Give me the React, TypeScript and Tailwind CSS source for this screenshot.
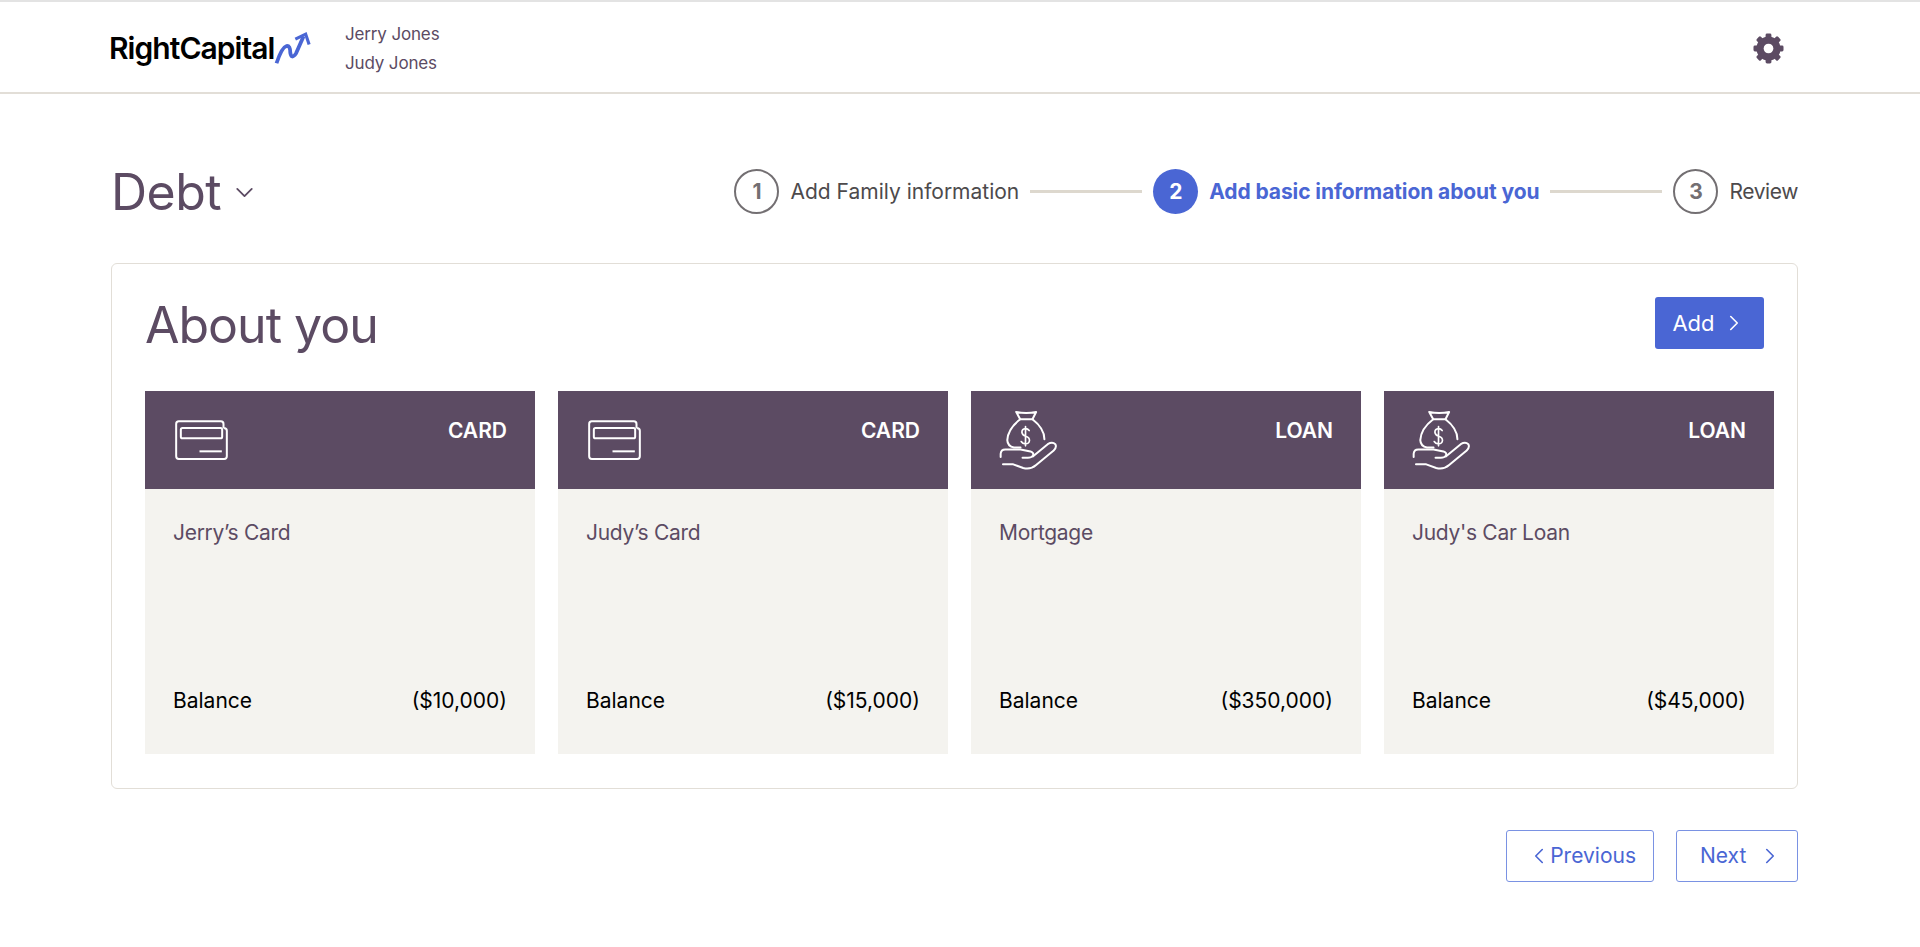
import { ChevronDown, ChevronLeft, ChevronRight } from "lucide-react";

const debts = [
  { kind: "CARD", name: "Jerry’s Card", balance: "($10,000)" },
  { kind: "CARD", name: "Judy’s Card", balance: "($15,000)" },
  { kind: "LOAN", name: "Mortgage", balance: "($350,000)" },
  { kind: "LOAN", name: "Judy's Car Loan", balance: "($45,000)" },
];

function LogoArrow() {
  return (
    <svg viewBox="820 90 118 108" className="w-[37px] h-[35px] shrink-0" fill="none" stroke="#4a66d4" strokeWidth="12">
      <path d="M828 191Q845 140 860 136Q872 134 872 158Q876 180 890 160L914 106" />
      <path d="M888 114L921 98L932 131" strokeWidth="10" />
    </svg>
  );
}

function Gear() {
  return (
    <svg viewBox="0 0 32 32" className="w-[31px] h-[31px]" fill="#5c4b63">
      <circle cx="16" cy="16" r="12.5" />
      {[0, 45, 90, 135, 180, 225, 270, 315].map((a) => (
        <rect key={a} x="13" y="0.5" width="6" height="6" rx="1.5" transform={`rotate(${a} 16 16)`} />
      ))}
      <circle cx="16" cy="16" r="5" fill="#fff" />
    </svg>
  );
}

function CardIcon() {
  return (
    <svg viewBox="135 118 158 120" className="w-[53px] h-[40px] ml-[2px]" fill="none" stroke="#fff" strokeWidth="6">
      <path d="M280 142V130Q280 122 272 122H146Q138 122 138 130V227Q138 235 146 235H282Q290 235 290 227V150Q290 142 280 142" />
      <rect x="152" y="142" width="124" height="31" rx="5" />
      <path d="M208 212H275" />
    </svg>
  );
}

function LoanIcon() {
  return (
    <svg viewBox="85 95 178 182" className="w-[59px] h-[61px]" fill="none" stroke="#fff" strokeWidth="6" strokeLinecap="round" strokeLinejoin="round">
      <path d="M137 100Q167 106 197 100L186 122H149Z" />
      <path d="M149 122Q112 150 110 185Q111 204 130 207H150M186 122Q222 150 222 182" />
      <path d="M176 156Q172 150 165 150Q154 151 154 161Q155 170 165 173Q177 176 177 186Q176 196 165 196Q156 196 152 189M165 144V202" strokeWidth="5" />
      <path d="M90 236V226Q91 213 104 213H150L180 219Q192 224 187 232Q183 238 172 238H156" />
      <path d="M187 234L232 197Q246 189 255 197Q260 206 250 216L197 260Q180 275 158 269L128 258H97" />
    </svg>
  );
}

function Step({ n, label, active, className }: { n: number; label: string; active?: boolean; className?: string }) {
  return (
    <div className="flex items-center gap-[11px]">
      <div
        className={
          active
            ? "w-[45px] h-[45px] rounded-full bg-[#4a66d4] text-white flex items-center justify-center font-bold text-[21px]"
            : "w-[45px] h-[45px] rounded-full border-2 border-[#736f72] text-[#736f72] flex items-center justify-center font-bold text-[21px]"
        }
      >
        {n}
      </div>
      <span className={(active ? "text-[21px] font-bold tracking-[-0.1px] text-[#4a66d4] " : "text-[21px] text-[#4d4a4c] ") + (className ?? "")}>{label}</span>
    </div>
  );
}

export default function App() {
  return (
    <div className="min-h-[947px] bg-white font-['Inter',sans-serif]">
      <header className="h-[94px] border-t-2 border-b-2 border-t-[#e3e3e3] border-b-[#e2ded7] flex items-center justify-between pt-[2px] pl-[109px] pr-[136px]">
        <div className="flex items-center">
          <div className="flex items-center w-[236px]">
            <span className="text-[30px] leading-none font-semibold tracking-[-0.95px] text-black">RightCapital</span>
            <LogoArrow />
          </div>
          <div className="pt-[1px] text-[17px] leading-[29px] tracking-[-0.15px] text-[#5c4b63]">
            <div>Jerry Jones</div>
            <div>Judy Jones</div>
          </div>
        </div>
        <Gear />
      </header>

      <main className="ml-[111px] mr-[122px]">
        <div className="flex items-center justify-between mt-[75px] h-[45px]">
          <div className="flex items-center gap-[9px]">
            <h1 className="text-[50px] leading-none text-[#5c4b63] tracking-[-0.5px]">Debt</h1>
            <ChevronDown className="w-[29px] h-[29px] text-[#5c4b63] mt-[2px]" strokeWidth={1.5} />
          </div>
          <div className="flex items-center">
            <Step n={1} label="Add Family information" />
            <div className="w-[112px] h-[3px] bg-[#ddd8ce] mx-[11px]" />
            <Step n={2} label="Add basic information about you" active />
            <div className="w-[112px] h-[3px] bg-[#ddd8ce] mx-[11px]" />
            <Step n={3} label="Review" className="tracking-[-0.4px]" />
          </div>
        </div>

        <section className="mt-[49px] h-[526px] border border-[#e2ded7] rounded-[6px] pl-[33px] pr-[23px] pt-[32px]">
          <div className="flex items-center justify-between h-[54px] pr-[10px]">
            <h2 className="pt-[3px] text-[50px] leading-none text-[#5c4b63] tracking-[-1px]">About you</h2>
            <button className="w-[109px] h-[52px] bg-[#4a66d4] rounded-[3px] text-white text-[22px] flex items-center justify-center gap-[6px]">
              Add
              <ChevronRight className="w-[26px] h-[26px]" strokeWidth={1.5} />
            </button>
          </div>

          <div className="grid grid-cols-4 gap-[23px] mt-[41px]">
            {debts.map((d) => (
              <div key={d.name} className="h-[363px] bg-[#f4f3ef] flex flex-col">
                <div className="h-[98px] bg-[#5c4b63] flex justify-between pl-[28px] pr-[28px]">
                  <div className="flex items-center">{d.kind === "CARD" ? <CardIcon /> : <LoanIcon />}</div>
                  <span className="text-white text-[21px] font-semibold mt-[24px]">{d.kind}</span>
                </div>
                <div className="flex flex-col flex-1 justify-between pl-[28px] pr-[28px] pt-[28px] pb-[38px]">
                  <div className="text-[21px] tracking-[-0.3px] text-[#5c4b63]">{d.name}</div>
                  <div className="flex justify-between text-[21px] text-black">
                    <span>Balance</span>
                    <span>{d.balance}</span>
                  </div>
                </div>
              </div>
            ))}
          </div>
        </section>

        <div className="flex justify-end gap-[22px] mt-[41px]">
          <button className="w-[148px] h-[52px] border border-[#7a92e3] rounded-[3px] text-[#4a66d4] text-[21px] flex items-center justify-end pr-[17px] gap-[1px]">
            <ChevronLeft className="w-[26px] h-[26px] -mr-[3px]" strokeWidth={1.5} />
            Previous
          </button>
          <button className="w-[122px] h-[52px] border border-[#7a92e3] rounded-[3px] text-[#4a66d4] text-[21px] flex items-center justify-between pl-[23px] pr-[14px]">
            Next
            <ChevronRight className="w-[26px] h-[26px]" strokeWidth={1.5} />
          </button>
        </div>
      </main>
    </div>
  );
}
